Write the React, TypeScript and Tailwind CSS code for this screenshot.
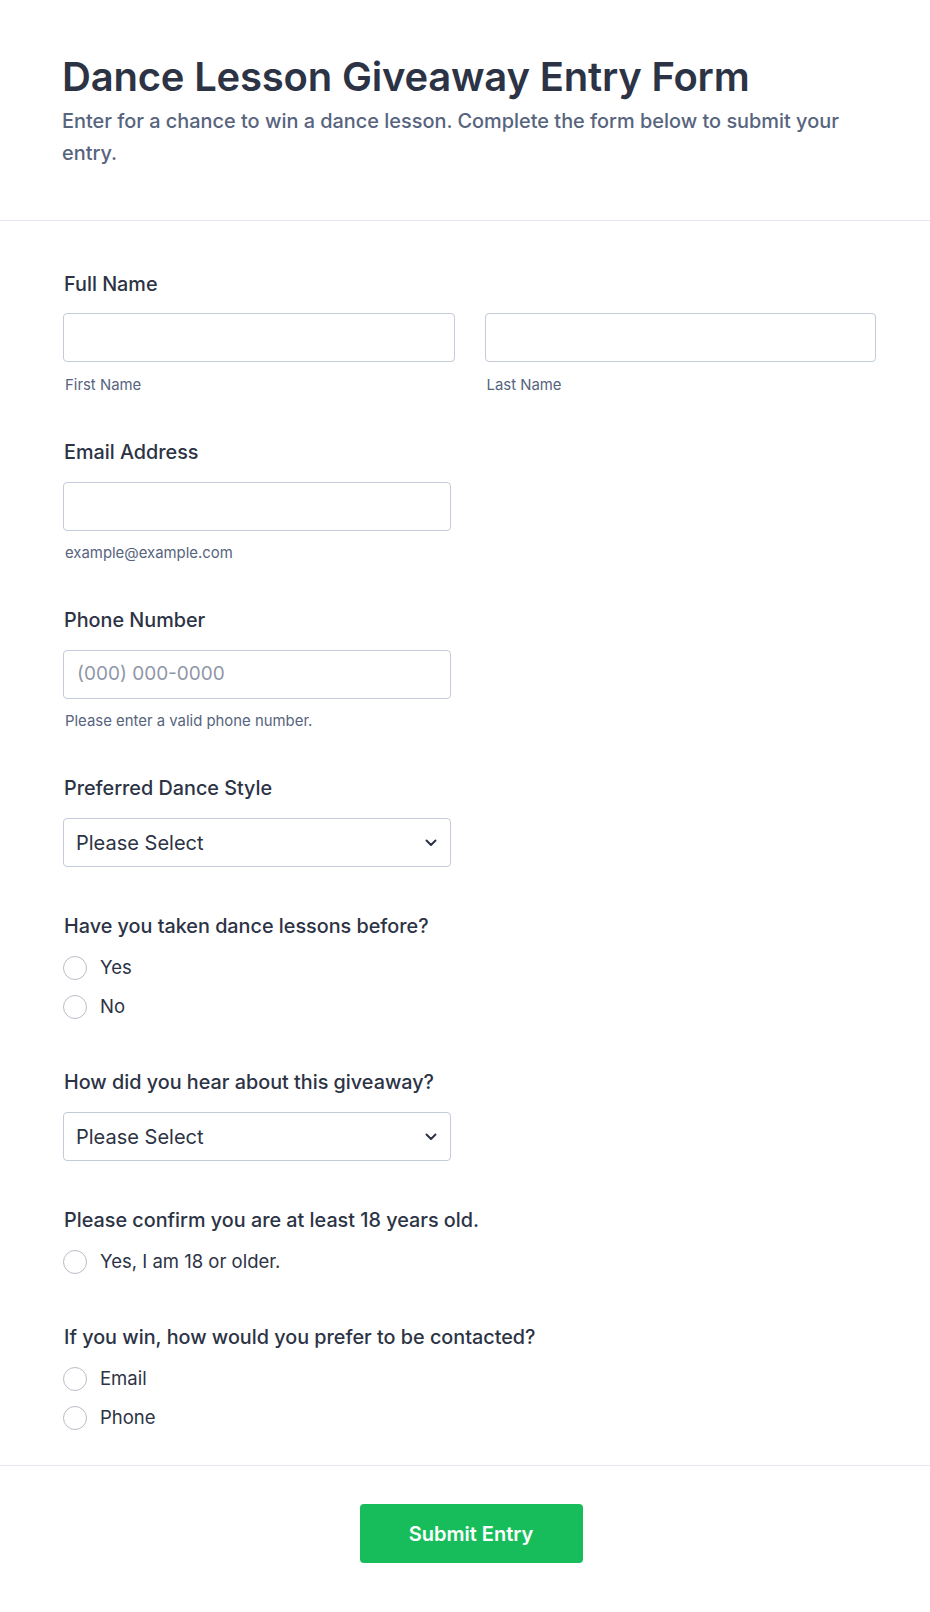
import React from "react";

const labelCls = "block h-[24px] leading-[24px] text-[19.8px] font-medium text-[#2c3345]";
const inputCls = "block h-[49px] w-full rounded-[4px] border border-[#c3cad8] bg-white";
const subCls = "block h-[20px] leading-[20px] text-[14.9px] text-[#57647e] pl-[2px]";

function Chevron() {
  return (
    <svg width="12" height="8" viewBox="0 0 12 8" fill="none">
      <path d="M1.5 1.5L6 6L10.5 1.5" stroke="#2c3345" strokeWidth="2" strokeLinecap="round" strokeLinejoin="round" />
    </svg>
  );
}

function Select() {
  return (
    <div className="flex h-[49px] w-[388px] items-center justify-between rounded-[4px] border border-[#c3cad8] bg-white pl-[12px] pr-[13px]">
      <span className="text-[20px] text-[#2c3345]">Please Select</span>
      <Chevron />
    </div>
  );
}

function Radio({ label }: { label: string }) {
  return (
    <div className="flex h-[24px] items-center gap-[13px]">
      <span className="block h-[24px] w-[24px] rounded-full border border-[#b8bdc9] bg-white" />
      <span className="text-[18.5px] text-[#2c3345]">{label}</span>
    </div>
  );
}

export default function App() {
  return (
    <div className="min-h-[1612px] w-[930px] bg-white" style={{ fontFamily: "Inter, 'Noto Sans', sans-serif" }}>
      <header className="border-b border-[#e3e8ee] pl-[62px] pr-[54px] pt-[53px] pb-[51px]">
        <h1 className="h-[48px] leading-[48px] text-[40px] font-semibold text-[#2c3345] tracking-[-0.2px]">
          Dance Lesson Giveaway Entry Form
        </h1>
        <p className="mt-[4px] text-[19.9px] font-medium leading-[32px] text-[#57647e]">
          Enter for a chance to win a dance lesson. Complete the form below to submit your entry.
        </p>
      </header>

      <main className="pl-[63px] pr-[54px] pt-[51px] pb-[35px] border-b border-[#e3e8ee]">
        <section>
          <label className={labelCls + " pl-[1px]"}>Full Name</label>
          <div className="mt-[17px] grid grid-cols-2 gap-[30px]">
            <div>
              <div className={inputCls} />
              <span className={subCls + " mt-[13px]"}>First Name</span>
            </div>
            <div>
              <div className={inputCls} />
              <span className={subCls + " mt-[13px]"}>Last Name</span>
            </div>
          </div>
        </section>

        <section className="mt-[45px]">
          <label className={labelCls + " pl-[1px]"}>Email Address</label>
          <div className="mt-[18px] w-[388px]">
            <div className={inputCls} />
            <span className={subCls + " mt-[12px]"}>example@example.com</span>
          </div>
        </section>

        <section className="mt-[45px]">
          <label className={labelCls + " pl-[1px]"}>Phone Number</label>
          <div className="mt-[18px] w-[388px]">
            <div className="flex h-[49px] w-full items-center rounded-[4px] border border-[#c3cad8] bg-white pl-[13px]">
              <span className="text-[19px] text-[#8f96a8]">(000) 000-0000</span>
            </div>
            <span className={subCls + " mt-[12px]"}>Please enter a valid phone number.</span>
          </div>
        </section>

        <section className="mt-[45px]">
          <label className={labelCls + " pl-[1px]"}>Preferred Dance Style</label>
          <div className="mt-[18px]">
            <Select />
          </div>
        </section>

        <section className="mt-[47px]">
          <label className={labelCls + " pl-[1px]"}>Have you taken dance lessons before?</label>
          <div className="mt-[18px] flex flex-col gap-[15px]">
            <Radio label="Yes" />
            <Radio label="No" />
          </div>
        </section>

        <section className="mt-[51px]">
          <label className={labelCls + " pl-[1px]"}>How did you hear about this giveaway?</label>
          <div className="mt-[18px]">
            <Select />
          </div>
        </section>

        <section className="mt-[47px]">
          <label className={labelCls + " pl-[1px]"}>Please confirm you are at least 18 years old.</label>
          <div className="mt-[18px] flex flex-col gap-[15px]">
            <Radio label="Yes, I am 18 or older." />
          </div>
        </section>

        <section className="mt-[51px]">
          <label className={labelCls + " pl-[1px]"}>If you win, how would you prefer to be contacted?</label>
          <div className="mt-[18px] flex flex-col gap-[15px]">
            <Radio label="Email" />
            <Radio label="Phone" />
          </div>
        </section>
      </main>

      <footer className="flex justify-center pt-[38px] pb-[50px]">
        <button className="ml-[12px] flex h-[59px] w-[223px] items-center justify-center rounded-[4px] bg-[#18bd5b] text-[20px] font-semibold text-white">
          Submit Entry
        </button>
      </footer>
    </div>
  );
}
